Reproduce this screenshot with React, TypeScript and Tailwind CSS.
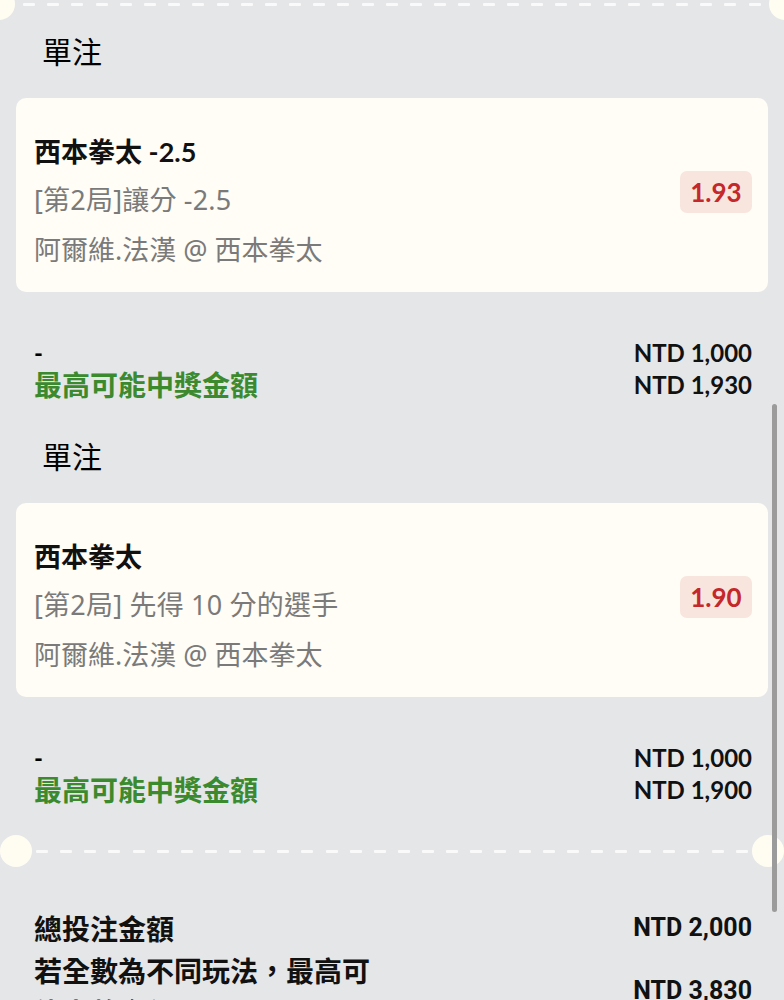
import React from "react";

interface Bet {
  title: string;
  market: string;
  match: string;
  odds: string;
  stake: string;
  payout: string;
}

const bets: Bet[] = [
  {
    title: "西本拳太 -2.5",
    market: "[第2局]讓分 -2.5",
    match: "阿爾維.法漢 @ 西本拳太",
    odds: "1.93",
    stake: "NTD 1,000",
    payout: "NTD 1,930",
  },
  {
    title: "西本拳太",
    market: "[第2局] 先得 10 分的選手",
    match: "阿爾維.法漢 @ 西本拳太",
    odds: "1.90",
    stake: "NTD 1,000",
    payout: "NTD 1,900",
  },
];

function Dashes({ count }: { count: number }) {
  return (
    <div className="flex flex-1 items-center justify-between">
      {Array.from({ length: count }).map((_, i) => (
        <span key={i} className="h-[3px] w-[12px] rounded-[1px] bg-[#fafafa]" />
      ))}
    </div>
  );
}

function BetBlock({ bet }: { bet: Bet }) {
  return (
    <div className="px-4">
      {/* header */}
      <div className="pl-[26px] text-[30px] leading-[60px] text-black font-['Noto_Sans_CJK_TC',sans-serif]">
        單注
      </div>

      {/* selection card */}
      <div className="mt-[18px] flex h-[194px] items-start justify-between rounded-[10px] bg-[#fffdf6] pl-[18px] pr-4">
        <div className="flex flex-col pt-[30px]">
          <div className="text-[27px] font-bold leading-[48px] text-[#111]">{bet.title}</div>
          <div className="text-[27px] tracking-[0.2px] leading-[48px] text-[#7a7a7a] font-['Noto_Sans','Noto_Sans_CJK_TC',sans-serif]">
            {bet.market}
          </div>
          <div className="mt-[2px] text-[27px] leading-[48px] text-[#7a7a7a] font-['Noto_Sans','Noto_Sans_CJK_TC',sans-serif]">
            {bet.match}
          </div>
        </div>
        <div className="mt-[73px] flex h-[42px] w-[72px] items-center justify-center rounded-[7px] bg-[#f8e5de] text-[26px] font-bold text-[#c4282a]">
          {bet.odds}
        </div>
      </div>

      {/* stake + payout */}
      <div className="mt-[45px] flex items-center justify-between pl-[18px] pr-4">
        <div className="flex flex-col">
          <span className="text-[24px] font-bold leading-[32px] text-black">-</span>
          <span className="text-[28px] font-bold leading-[32px] text-[#3b8a2e]">最高可能中獎金額</span>
        </div>
        <div className="flex flex-col items-end text-[24px] font-bold leading-[32px] text-[#111]">
          <span>{bet.stake}</span>
          <span>{bet.payout}</span>
        </div>
      </div>
    </div>
  );
}

export default function App() {
  return (
    <div className="relative h-[1000px] w-[784px] overflow-hidden bg-[#e5e6e8] font-['Lato','Noto_Sans_CJK_TC',sans-serif]">
      {/* top perforation (tail of previous ticket) */}
      <div className="-mt-[12px] flex h-8 items-center">
        <span className="-ml-[17px] h-8 w-8 shrink-0 rounded-full bg-[#fffdf2]" />
        <div className="flex flex-1 pl-[8px] pr-[8px]">
          <Dashes count={31} />
        </div>
        <span className="-mr-[17px] h-8 w-8 shrink-0 rounded-full bg-[#fffdf2]" />
      </div>

      <BetBlock bet={bets[0]} />
      <div className="mt-[24px]">
        <BetBlock bet={bets[1]} />
      </div>

      {/* perforation */}
      <div className="mt-[29px] flex h-8 items-center">
        <span className="h-8 w-8 shrink-0 rounded-full bg-[#fffdf2]" />
        <div className="flex flex-1 px-1">
          <Dashes count={30} />
        </div>
        <span className="h-8 w-8 shrink-0 rounded-full bg-[#fffdf2]" />
      </div>

      {/* totals */}
      <div className="mt-[40px] flex flex-col pl-[34px] pr-[32px] font-['Noto_Sans_CJK_TC',sans-serif]">
        <div className="flex items-center justify-between">
          <span className="text-[28px] font-bold leading-[42px] text-[#111]">總投注金額</span>
          <span className="text-[25px] font-bold leading-[42px] text-[#111] font-['Roboto',sans-serif]">
            NTD 2,000
          </span>
        </div>
        <div className="flex items-center justify-between">
          <span className="w-[360px] text-[28px] font-bold leading-[42px] text-[#111]">
            若全數為不同玩法，最高可能中獎金額
          </span>
          <span className="text-[25px] font-bold leading-[42px] text-[#111] font-['Roboto',sans-serif]">
            NTD 3,830
          </span>
        </div>
      </div>

      {/* overlay scrollbar */}
      <div className="absolute right-[7px] top-[404px] h-[508px] w-[5px] rounded-full bg-[#9b9b9b]" />
    </div>
  );
}
